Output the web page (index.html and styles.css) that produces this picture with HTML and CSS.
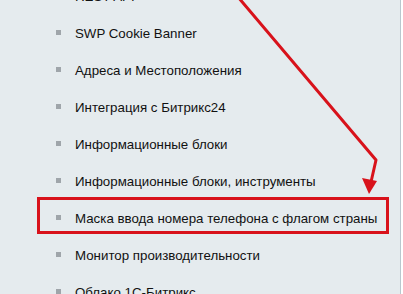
FILE: index.html
```html
<!DOCTYPE html>
<html lang="ru">
<head>
<meta charset="utf-8">
<link rel="stylesheet" href="styles.css">
</head>
<body>
<div class="panel">
  <ul class="modules">
    <li class="item"><span class="bullet"></span><span class="label">REST API</span></li>
    <li class="item"><span class="bullet"></span><span class="label">SWP Cookie Banner</span></li>
    <li class="item"><span class="bullet"></span><span class="label">Адреса и Местоположения</span></li>
    <li class="item"><span class="bullet"></span><span class="label">Интеграция с Битрикс24</span></li>
    <li class="item"><span class="bullet"></span><span class="label">Информационные блоки</span></li>
    <li class="item"><span class="bullet"></span><span class="label">Информационные блоки, инструменты</span></li>
    <li class="item"><span class="bullet"></span><span class="label">Маска ввода номера телефона с флагом страны</span></li>
    <li class="item"><span class="bullet"></span><span class="label">Монитор производительности</span></li>
    <li class="item"><span class="bullet"></span><span class="label">Облако 1С-Битрикс</span></li>
  </ul>
  <div class="highlight"></div>
  <svg class="arrow" width="403" height="294" viewBox="0 0 403 294">
    <polyline points="238,-3 376,160 371,182" fill="none" stroke="#d8121b" stroke-width="3" stroke-linejoin="round"/>
    <polygon points="369,194 362,178 377,181" fill="#d8121b"/>
  </svg>
</div>
</body>
</html>
```
FILE: styles.css
```css
html, body {
  margin: 0;
  padding: 0;
  background: #ffffff;
}
body {
  width: 403px;
  height: 294px;
  overflow: hidden;
  font-family: "Liberation Sans", Arial, sans-serif;
}
.panel {
  position: relative;
  width: 400px;
  height: 294px;
  background: #e5ebee;
  border-right: 1px solid #b9c7ce;
  overflow: hidden;
}
.modules {
  list-style: none;
  margin: -22.5px 0 0 0;
  padding: 0 0 0 56px;
}
.item {
  display: flex;
  align-items: center;
  height: 37px;
  font-size: 13.3px;
  color: #111111;
}
.bullet {
  width: 5px;
  height: 5px;
  background: #9fa5aa;
  margin-right: 14px;
  margin-top: -2px;
  flex: none;
}
.label {
  white-space: nowrap;
}
.highlight {
  position: absolute;
  left: 37px;
  top: 197px;
  width: 352px;
  height: 37px;
  box-sizing: border-box;
  border: 3px solid #d8121b;
}
.arrow {
  position: absolute;
  left: 0;
  top: 0;
}
```
